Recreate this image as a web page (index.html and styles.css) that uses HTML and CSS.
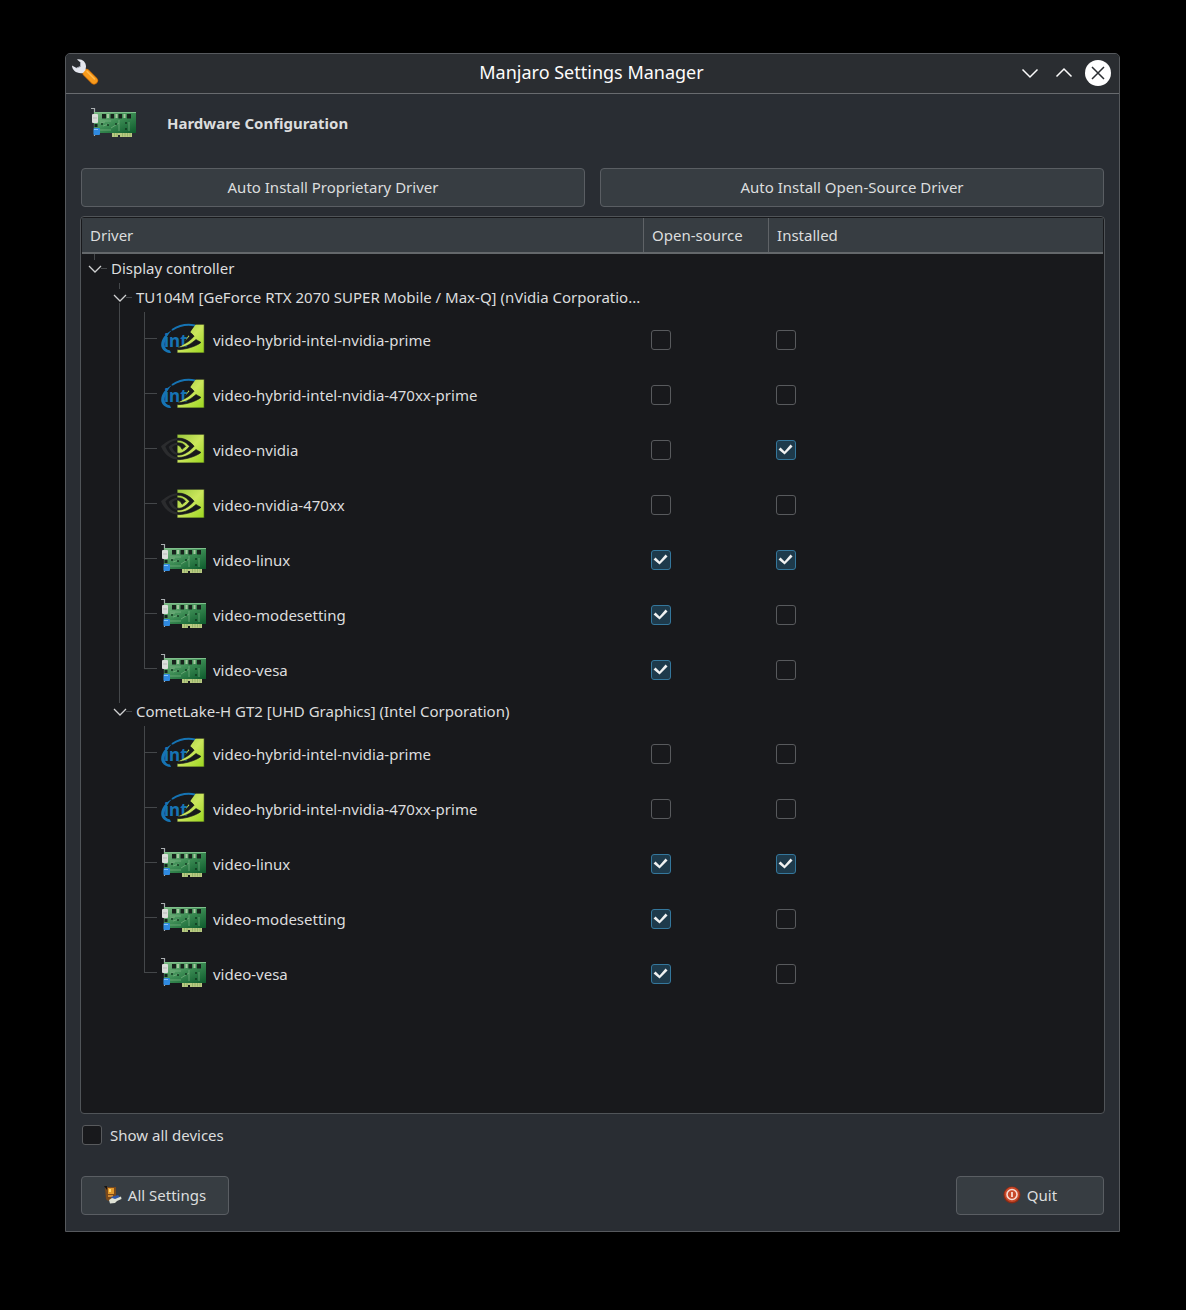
FILE: index.html
```html
<!DOCTYPE html>
<html lang="en">
<head>
<meta charset="utf-8">
<meta name="viewport" content="width=device-width, initial-scale=1">
<title>Manjaro Settings Manager</title>
<link rel="stylesheet" href="styles.css">
</head>
<body>
<svg class="sprite" aria-hidden="true">
  <defs>
    <linearGradient id="board" x1="0" y1="0" x2="1" y2="1">
      <stop offset="0" stop-color="#7fbd86"/><stop offset=".5" stop-color="#3a8a52"/><stop offset="1" stop-color="#0d5a2c"/>
    </linearGradient>
    <linearGradient id="lime" x1="0" y1="0" x2="1" y2="1">
      <stop offset="0" stop-color="#98c63a"/><stop offset=".5" stop-color="#cbe65c"/><stop offset="1" stop-color="#9bd61e"/>
    </linearGradient>
    <clipPath id="hybrid-clip"><path d="M35 8H44V37H16V32L22 29L26 22L30 15Z"/></clipPath>
  </defs>
  <symbol id="card" viewBox="0 0 48 48">
    <path d="M0 8.500H3.500V36" fill="none" stroke="#a9adb0" stroke-width="1.200"/>
    <path d="M21 32H41V37H29V35H27V37H21Z" fill="#b9c982"/>
    <path d="M23.500 33V36.500M26 33V36.500M31.500 33V36.500M34 33V36.500M36.500 33V36.500M39 33V36.500" stroke="#8aae62" stroke-width=".8"/>
    <rect x="3" y="12" width="42" height="21" fill="url(#board)"/>
    <path d="M3 12.500H45" stroke="#7fc08c"/>
    <path d="M17 14V18M25.500 14V18M33.500 14V18" stroke="#a9c9a2" stroke-width="2"/>
    <g fill="#17231c"><rect x="11" y="14" width="4" height="4.500"/><rect x="19.500" y="14" width="3.500" height="4.500"/><rect x="27.500" y="14" width="3.500" height="4.500"/><rect x="36" y="14" width="4" height="4.500"/><rect x="3.500" y="24" width="3" height="3"/></g>
    <path d="M9 21H20M9 23L14 22M12 26L18 24M20 28L28 23M9 30H20M28 20V31M38 22V31" fill="none" stroke="#7db584" stroke-width=".7"/>
    <path d="M10 24H12M16 25H18M24 24H26M34 23H36M35 28V30" fill="none" stroke="#123a20" stroke-width="1.600"/>
    <rect x="1" y="14" width="6" height="9" rx="1" fill="#dcdedb"/>
    <path d="M2 18H6" stroke="#b8b8b8"/>
    <rect x="2.500" y="28" width="6.500" height="7" rx="1" fill="#2f8ae0"/>
    <path d="M3 29.500H7" stroke="#8cc4f5"/>
  </symbol>
  <symbol id="nvidia" viewBox="0 0 48 48">
    <g transform="translate(0 1) scale(1.800)">
      <path fill="url(#lime)" stroke="#18191c" stroke-width=".35" d="M8.948 8.798v-1.430a6.700 6.700 0 0 1 .424-.018c3.922-.124 6.493 3.374 6.493 3.374s-2.774 3.851-5.750 3.851c-.398 0-.787-.062-1.158-.185v-4.346c1.528.185 1.837.857 2.747 2.385l2.040-1.714s-1.492-1.952-4-1.952a6.016 6.016 0 0 0-.796.035m0-4.735v2.138l.424-.027c5.450-.185 9.010 4.470 9.010 4.470s-4.080 4.964-8.330 4.964c-.370 0-.733-.035-1.095-.097v1.325c.300.035.610.062.910.062 3.957 0 6.820-2.023 9.593-4.408.459.371 2.340 1.263 2.730 1.652-2.633 2.208-8.772 3.984-12.253 3.984-.335 0-.653-.018-.971-.053v1.864H24V4.063z"/>
      <path fill="#2b2c2e" d="M8.948 14.389v1.131c-3.657-.654-4.673-4.460-4.673-4.460s1.758-1.944 4.673-2.262v1.237H8.940c-1.528-.186-2.730 1.245-2.730 1.245s.680 2.412 2.739 3.110M2.456 10.900s2.164-3.197 6.500-3.533V6.201C4.153 6.590 0 10.653 0 10.653s2.350 6.802 8.948 7.420v-1.237c-4.840-.6-6.492-5.936-6.492-5.936z"/>
    </g>
  </symbol>
  <symbol id="swoosh" viewBox="0 0 48 48">
    <path d="M11 14C3 18-1 26 .500 31C2 35 6 37 10 37L9 34.500C4 34 2.500 30 4.500 24C6 20 8 17 11 14Z" fill="#1674b4"/>
    <path d="M11 14C18 9.500 27 8 34 9.500" fill="none" stroke="#1674b4" stroke-width="2"/>
  </symbol>
  <symbol id="hybrid-eye" viewBox="0 0 48 48">
    <g clip-path="url(#hybrid-clip)"><use href="#nvidia" width="48" height="48"/></g>
  </symbol>
</svg>

<main class="window">
  <header class="titlebar">
    <svg class="app-icon" viewBox="0 0 28 28" aria-hidden="true">
      <path d="M14.500 14L22 21.500" stroke="#c96a06" stroke-width="8" stroke-linecap="round"/>
      <path d="M14.500 14L22 21.500" stroke="#f79a1c" stroke-width="6.500" stroke-linecap="round"/>
      <path d="M15 12.500L22.500 20" stroke="#fdb94d" stroke-width="1.500" stroke-linecap="round"/>
      <path d="M5 .5C10-.5 14 3 14 7.500L13.500 11L11 14C5 15 0 11.500 0 6.500L4.500 9L8.500 7.500V3.500Z" fill="#e4e6ee"/>
      <path d="M4.500 9L8.500 7.500V3.500" fill="none" stroke="#a9adb8"/>
    </svg>
    <h1 class="title">Manjaro Settings Manager</h1>
    <div class="window-controls">
      <button class="control" type="button" aria-label="Minimize"><svg viewBox="0 0 26 26"><path d="M5.500 9.500L13 17L20.500 9.500"/></svg></button>
      <button class="control" type="button" aria-label="Maximize"><svg viewBox="0 0 26 26"><path d="M5.500 16.500L13 9L20.500 16.500"/></svg></button>
      <button class="control close" type="button" aria-label="Close"><svg viewBox="0 0 26 26"><path d="M7 7L19 19M19 7L7 19"/></svg></button>
    </div>
  </header>

  <div class="content">
    <div class="page-head">
      <svg class="device" aria-hidden="true"><use href="#card"/></svg>
      <h2 class="heading">Hardware Configuration</h2>
    </div>
    <div class="actions">
      <button class="button" type="button">Auto Install Proprietary Driver</button>
      <button class="button" type="button">Auto Install Open-Source Driver</button>
    </div>

    <div class="tree-frame">
      <table class="tree">
        <colgroup><col class="col-driver"><col class="col-open"><col></colgroup>
        <thead><tr><th scope="col">Driver</th><th scope="col">Open-source</th><th scope="col">Installed</th></tr></thead>
        <tbody>
          <tr class="group"><td colspan="3"><div class="node"><button class="rail toggle above" type="button" aria-label="Collapse Display controller"><svg viewBox="0 0 14 8"><path d="M1 1L7 7L13 1"/></svg></button><span class="label">Display controller</span></div></td></tr>
          <tr class="group"><td colspan="3"><div class="node"><span class="rail"></span><button class="rail toggle above below" type="button" aria-label="Collapse TU104M"><svg viewBox="0 0 14 8"><path d="M1 1L7 7L13 1"/></svg></button><span class="label">TU104M [GeForce RTX 2070 SUPER Mobile / Max-Q] (nVidia Corporatio...</span></div></td></tr>
          <tr class="driver"><td><div class="node"><span class="rail"></span><span class="rail line"></span><span class="rail tee"></span><svg class="device" viewBox="0 0 48 48"><use href="#swoosh"/><text class="logo-text" x="3" y="31">int</text><use href="#hybrid-eye"/></svg><span class="label">video-hybrid-intel-nvidia-prime</span></div></td><td><input type="checkbox" aria-label="Open-source"></td><td><input type="checkbox" aria-label="Installed"></td></tr>
          <tr class="driver"><td><div class="node"><span class="rail"></span><span class="rail line"></span><span class="rail tee"></span><svg class="device" viewBox="0 0 48 48"><use href="#swoosh"/><text class="logo-text" x="3" y="31">int</text><use href="#hybrid-eye"/></svg><span class="label">video-hybrid-intel-nvidia-470xx-prime</span></div></td><td><input type="checkbox" aria-label="Open-source"></td><td><input type="checkbox" aria-label="Installed"></td></tr>
          <tr class="driver"><td><div class="node"><span class="rail"></span><span class="rail line"></span><span class="rail tee"></span><svg class="device"><use href="#nvidia"/></svg><span class="label">video-nvidia</span></div></td><td><input type="checkbox" aria-label="Open-source"></td><td><input type="checkbox" aria-label="Installed" checked></td></tr>
          <tr class="driver"><td><div class="node"><span class="rail"></span><span class="rail line"></span><span class="rail tee"></span><svg class="device"><use href="#nvidia"/></svg><span class="label">video-nvidia-470xx</span></div></td><td><input type="checkbox" aria-label="Open-source"></td><td><input type="checkbox" aria-label="Installed"></td></tr>
          <tr class="driver"><td><div class="node"><span class="rail"></span><span class="rail line"></span><span class="rail tee"></span><svg class="device"><use href="#card"/></svg><span class="label">video-linux</span></div></td><td><input type="checkbox" aria-label="Open-source" checked></td><td><input type="checkbox" aria-label="Installed" checked></td></tr>
          <tr class="driver"><td><div class="node"><span class="rail"></span><span class="rail line"></span><span class="rail tee"></span><svg class="device"><use href="#card"/></svg><span class="label">video-modesetting</span></div></td><td><input type="checkbox" aria-label="Open-source" checked></td><td><input type="checkbox" aria-label="Installed"></td></tr>
          <tr class="driver"><td><div class="node"><span class="rail"></span><span class="rail line"></span><span class="rail elbow"></span><svg class="device"><use href="#card"/></svg><span class="label">video-vesa</span></div></td><td><input type="checkbox" aria-label="Open-source" checked></td><td><input type="checkbox" aria-label="Installed"></td></tr>
          <tr class="group"><td colspan="3"><div class="node"><span class="rail"></span><button class="rail toggle above" type="button" aria-label="Collapse CometLake-H GT2"><svg viewBox="0 0 14 8"><path d="M1 1L7 7L13 1"/></svg></button><span class="label">CometLake-H GT2 [UHD Graphics] (Intel Corporation)</span></div></td></tr>
          <tr class="driver"><td><div class="node"><span class="rail"></span><span class="rail"></span><span class="rail tee"></span><svg class="device" viewBox="0 0 48 48"><use href="#swoosh"/><text class="logo-text" x="3" y="31">int</text><use href="#hybrid-eye"/></svg><span class="label">video-hybrid-intel-nvidia-prime</span></div></td><td><input type="checkbox" aria-label="Open-source"></td><td><input type="checkbox" aria-label="Installed"></td></tr>
          <tr class="driver"><td><div class="node"><span class="rail"></span><span class="rail"></span><span class="rail tee"></span><svg class="device" viewBox="0 0 48 48"><use href="#swoosh"/><text class="logo-text" x="3" y="31">int</text><use href="#hybrid-eye"/></svg><span class="label">video-hybrid-intel-nvidia-470xx-prime</span></div></td><td><input type="checkbox" aria-label="Open-source"></td><td><input type="checkbox" aria-label="Installed"></td></tr>
          <tr class="driver"><td><div class="node"><span class="rail"></span><span class="rail"></span><span class="rail tee"></span><svg class="device"><use href="#card"/></svg><span class="label">video-linux</span></div></td><td><input type="checkbox" aria-label="Open-source" checked></td><td><input type="checkbox" aria-label="Installed" checked></td></tr>
          <tr class="driver"><td><div class="node"><span class="rail"></span><span class="rail"></span><span class="rail tee"></span><svg class="device"><use href="#card"/></svg><span class="label">video-modesetting</span></div></td><td><input type="checkbox" aria-label="Open-source" checked></td><td><input type="checkbox" aria-label="Installed"></td></tr>
          <tr class="driver"><td><div class="node"><span class="rail"></span><span class="rail"></span><span class="rail elbow"></span><svg class="device"><use href="#card"/></svg><span class="label">video-vesa</span></div></td><td><input type="checkbox" aria-label="Open-source" checked></td><td><input type="checkbox" aria-label="Installed"></td></tr>
        </tbody>
      </table>
    </div>

    <label class="show-all"><input type="checkbox">Show all devices</label>

    <footer class="footer">
      <button class="button" type="button">
        <svg class="button-icon" viewBox="0 0 18 18" aria-hidden="true">
          <path d="M1 1H12V11L4 15L2 13Z" fill="#7a4a1c"/><path d="M0 0H3V4Z" fill="#161412"/><rect x="4" y="2" width="6" height="6" fill="#e39a2c"/><rect x="5" y="3" width="2" height="3" fill="#ffd66e"/><rect x="4" y="9" width="5" height="2" fill="#cf8a35"/>
          <path d="M7 11L14 9L16 11L9 14Z" fill="#2f56a6"/><path d="M5 14L8 12L11 13L17 10.500L17.500 13L13 15L11 17L6 17.500Z" fill="#dfe2d6"/>
        </svg>All Settings</button>
      <button class="button" type="button">
        <svg class="button-icon" viewBox="0 0 18 18" aria-hidden="true">
          <circle cx="9" cy="9" r="8.500" fill="#8c2b14"/><circle cx="9" cy="8.500" r="7.500" fill="#c8492a"/><circle cx="9" cy="8.500" r="5" fill="none" stroke="#f6dcd4" stroke-width="1.600"/><path d="M9 6V11" stroke="#f6dcd4" stroke-width="1.800"/>
        </svg>Quit</button>
    </footer>
  </div>
</main>
</body>
</html>
```

FILE: styles.css
```css
* {
  box-sizing: border-box;
}

body {
  display: flex;
  min-height: 100vh;
  margin: 0;
  padding: 53px 66px 78px 65px;
  background: #000;
  color: #dcddde;
  font: 15px/20px "Noto Sans", sans-serif;
}

button,
input {
  margin: 0;
  font: inherit;
  color: inherit;
}

.sprite {
  position: absolute;
  width: 0;
  height: 0;
}

.window {
  display: flex;
  flex: 1;
  flex-direction: column;
  min-width: 0;
  border: 1px solid #56595d;
  border-radius: 5px 5px 0 0;
  background: #292d33;
}

/* Title bar */
.titlebar {
  display: grid;
  grid-template-columns: 1fr auto 1fr;
  align-items: center;
  height: 40px;
  padding: 0 8px 2px 6px;
  border-bottom: 1px solid #686b6f;
  border-radius: 4px 4px 0 0;
  background: #2a2d31;
}

.app-icon {
  width: 28px;
  height: 28px;
}

.title {
  margin: 0;
  padding-bottom: 2px;
  color: #fcfcfc;
  font-size: 18px;
  font-weight: 400;
  line-height: 24px;
}

.window-controls {
  display: flex;
  justify-content: flex-end;
  gap: 8px;
}

.control {
  width: 26px;
  height: 26px;
  padding: 0;
  border: 0;
  border-radius: 50%;
  background: none;
}

.control svg {
  display: block;
  fill: none;
  stroke: #fcfcfc;
  stroke-width: 1.5;
}

.close {
  background: #fff;
}

.close svg {
  stroke: #2a2d31;
}

/* Page */
.content {
  display: flex;
  flex: 1;
  flex-direction: column;
  padding: 6px 15px 16px;
}

.page-head {
  display: flex;
  align-items: center;
  gap: 28px;
  height: 48px;
  padding-left: 10px;
}

.heading {
  margin: 0;
  padding-bottom: 2px;
  font-size: 15px;
  font-weight: 700;
}

.device {
  flex: none;
  width: 48px;
  height: 48px;
}

.logo-text {
  fill: #1674b4;
  font-size: 17px;
  font-weight: 700;
}

.actions {
  display: grid;
  grid-template-columns: 1fr 1fr;
  gap: 15px;
  margin: 20px 0 9px;
}

.button {
  display: flex;
  align-items: center;
  justify-content: center;
  gap: 6px;
  height: 39px;
  padding: 0 16px 2px;
  border: 1px solid #5a5e63;
  border-radius: 4px;
  background: #373d42;
}

.button-icon {
  width: 18px;
  height: 18px;
}

/* Driver tree */
.tree-frame {
  flex: 1;
  margin: 0 -1px;
  padding: 1px;
  border: 1px solid #505458;
  border-radius: 4px;
  background: #18191c;
}

.tree {
  width: 100%;
  border-collapse: collapse;
  table-layout: fixed;
}

.col-driver {
  width: 55%;
}

.col-open {
  width: 125px;
}

.tree th {
  height: 35px;
  padding: 0 8px;
  border-right: 1px solid #5f6367;
  border-bottom: 2px solid #64686b;
  background: #373d42;
  font-weight: 400;
  text-align: left;
}

.tree th:last-child {
  border-right: 0;
}

.tree td {
  padding: 0;
}

.tree td + td {
  padding-left: 7px;
}

.node {
  display: flex;
  align-items: center;
}

.group .node {
  height: 29px;
}

.driver .node {
  height: 55px;
}

.label {
  padding-left: 4px;
  white-space: nowrap;
}

.group .label {
  padding-bottom: 2px;
}

.rail {
  flex: none;
  align-self: stretch;
  width: 25px;
  padding: 0;
  border: 0;
  background: none no-repeat;
}

.rail + .device {
  margin-left: 4px;
}

.line,
.tee,
.elbow,
.above,
.below {
  --stroke: linear-gradient(#44474a, #44474a);
}

.line {
  background-image: var(--stroke);
  background-position: 12px 0;
  background-size: 1px 100%;
}

.tee,
.elbow {
  background-image: var(--stroke), var(--stroke);
  background-position: 12px 0, 12px 26px;
  background-size: 1px 100%, 13px 1px;
}

.elbow {
  background-size: 1px 27px, 13px 1px;
}

.above {
  background-image: var(--stroke), var(--stroke);
  background-position: 12px 0, 19px 14px;
  background-size: 1px 6px, 6px 1px;
}

.below {
  background-image: var(--stroke), var(--stroke), var(--stroke);
  background-position: 12px 0, 19px 14px, 12px 100%;
  background-size: 1px 6px, 6px 1px, 1px 9px;
}

.toggle svg {
  display: block;
  width: 14px;
  height: 8px;
  margin: 0 auto;
  fill: none;
  stroke: #d0d1d2;
  stroke-width: 1.3;
}

/* Tick boxes */
input[type="checkbox"] {
  display: block;
  flex: none;
  width: 20px;
  height: 20px;
  border: 1px solid #585a5d;
  border-radius: 3px;
  background: #18191c;
  appearance: none;
}

input[type="checkbox"]:checked {
  border-color: #34779c;
  background: #1e3a4b;
}

input[type="checkbox"]:checked::before {
  display: block;
  width: 18px;
  height: 18px;
  background: #f0f1f1;
  clip-path: polygon(2px 9px, 4px 7px, 8px 11px, 14px 4px, 16px 6px, 8px 14px);
  content: "";
}

.show-all {
  display: flex;
  align-items: center;
  align-self: flex-start;
  gap: 8px;
  margin: 11px 0 31px 1px;
}

.footer {
  display: flex;
  justify-content: space-between;
}

.footer .button {
  width: 148px;
}
```
